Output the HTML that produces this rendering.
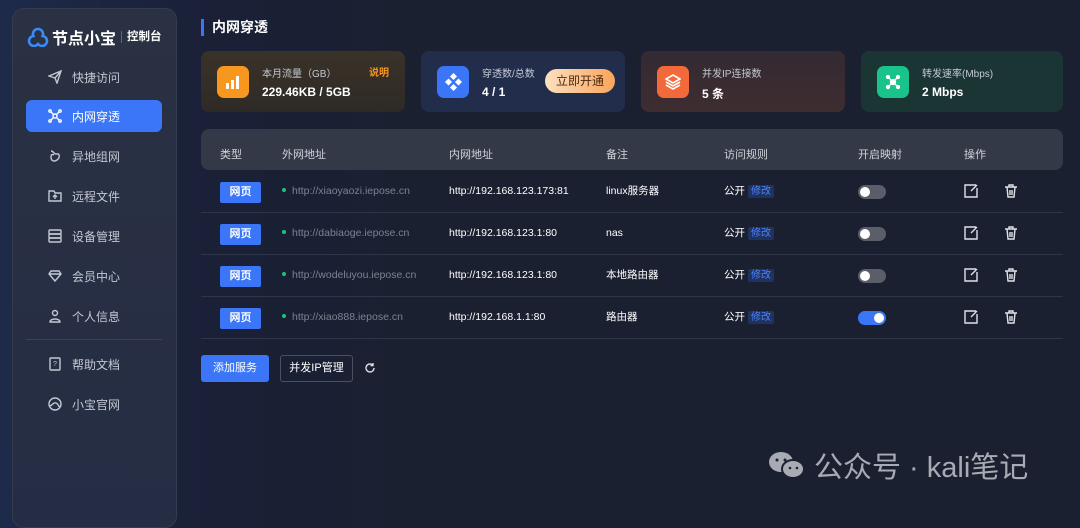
<!DOCTYPE html><html><head><meta charset="utf-8"><style>
*{margin:0;padding:0;box-sizing:border-box}
body{width:1080px;height:509px;overflow:hidden;background:linear-gradient(90deg,#1d2a4a 0,#1a2036 20%,#1b2030 40%,#1b2030 100%);font-family:"Liberation Sans","Noto Sans CJK SC",sans-serif;color:#fff;position:relative}
.side{position:absolute;left:12px;top:8px;width:165px;height:520px;border-radius:12px;background:linear-gradient(180deg,#2a3142,#252d45);border:1px solid #343b4d}
.logo{position:absolute;left:14px;top:16px;display:flex;align-items:center;font-size:16px;font-weight:bold;white-space:nowrap}
.logo small{font-size:11.5px;border-left:1px solid #666;padding-left:5px;margin-left:5px;font-weight:bold;line-height:12px}
.nav{position:absolute;left:13px;width:136px;height:32px;border-radius:6px;display:flex;align-items:center;padding-left:22px;font-size:12px;color:#c4c8d2}
.nav svg{width:14px;height:14px;margin-right:10px;fill:none;stroke:#c4c8d2;stroke-width:1.4}
.nav.act{background:#3a76f7;color:#fff}.nav.act svg{stroke:#fff}
.title{position:absolute;left:201px;top:19px;border-left:3px solid #3a76f7;padding-left:8px;font-size:14px;font-weight:bold;height:17px;line-height:17px}
.card{position:absolute;top:51px;height:61px;border-radius:8px;overflow:hidden}
.ic{position:absolute;left:16px;top:15px;width:32px;height:32px;border-radius:7px;display:flex;align-items:center;justify-content:center}
.cl{position:absolute;left:61px;top:14px;font-size:10px;color:#c4c8d2}
.cv{position:absolute;left:61px;top:34px;font-size:12px;font-weight:bold}
.th{position:absolute;left:201px;top:129px;width:862px;height:41px;background:#343947;border-radius:8px}
.cell{position:absolute;font-size:11px}
.hd{top:146px;color:#d0d3da}
.row{position:absolute;left:201px;width:862px;height:42px;border-bottom:1px solid #30364a}
.tag{position:absolute;left:19px;top:11px;width:41px;height:21px;background:#3a76f7;border-radius:2px;font-size:11px;font-weight:bold;text-align:center;line-height:21px}
.ext{position:absolute;left:81px;top:13px;font-size:10.5px;line-height:14px;color:#7d8290}
.ext:before{content:"";display:inline-block;width:4px;height:4px;border-radius:50%;background:#1fc27c;margin-right:6px;vertical-align:2px}
.r{position:absolute;top:13px;font-size:10.5px;line-height:14px;height:14px;white-space:nowrap}
.mod{background:#1f3260;color:#4b83ff;padding:1px 3px;margin-left:3px;border-radius:2px;font-size:10px}
.tg{position:absolute;left:657px;top:14px;width:28px;height:14px;border-radius:7px;background:#5a5e69}
.tg i{position:absolute;left:2px;top:2px;width:10px;height:10px;border-radius:50%;background:#fff}
.tg.on{background:#3a76f7}.tg.on i{left:16px}
.op{position:absolute;top:12px;width:16px;height:16px;fill:none;stroke:#e0e2e8;stroke-width:1.4}
</style></head><body>
<div class="side">
<div class="logo"><svg width="22" height="20" viewBox="0 0 22 20"><path d="M11 2a5 5 0 0 0-4.6 7A5 5 0 1 0 11 17a5 5 0 1 0 4.6-8A5 5 0 0 0 11 2z" fill="none" stroke="#3a8af7" stroke-width="2.6"/></svg><span style="margin-left:3px">节点小宝</span><small>控制台</small></div>
<div class="nav" style="top:52px"><svg viewBox="0 0 14 14"><path d="M1 6L13 1 9 13 7 8z M7 8l6-7"/></svg>快捷访问</div>
<div class="nav act" style="top:91px"><svg viewBox="0 0 14 14"><circle cx="7" cy="7" r="2"/><circle cx="2" cy="2" r="1.2"/><circle cx="12" cy="2" r="1.2"/><circle cx="2" cy="12" r="1.2"/><circle cx="12" cy="12" r="1.2"/><path d="M3 3l2.5 2.5M11 3L8.5 5.5M3 11l2.5-2.5M11 11L8.5 8.5"/></svg>内网穿透</div>
<div class="nav" style="top:131px"><svg viewBox="0 0 14 14"><path d="M3 2c3 0 3 4 6 3s3 4 0 6-6 1-6-3 3-2 3-2"/></svg>异地组网</div>
<div class="nav" style="top:171px"><svg viewBox="0 0 14 14"><path d="M1 2h5l1 2h6v8H1z M7 10V6M5 8l2-2 2 2"/></svg>远程文件</div>
<div class="nav" style="top:211px"><svg viewBox="0 0 14 14"><rect x="1" y="1" width="12" height="4" rx="1"/><rect x="1" y="5" width="12" height="4" rx="1"/><rect x="1" y="9" width="12" height="4" rx="1"/></svg>设备管理</div>
<div class="nav" style="top:251px"><svg viewBox="0 0 14 14"><path d="M3 2h8l2 3-6 7-6-7z M1 5h12"/></svg>会员中心</div>
<div class="nav" style="top:291px"><svg viewBox="0 0 14 14"><circle cx="7" cy="4" r="2.5"/><path d="M2 13c0-4 10-4 10 0z"/></svg>个人信息</div>
<div style="position:absolute;left:13px;top:330px;width:136px;height:1px;background:#3a4152"></div>
<div class="nav" style="top:339px"><svg viewBox="0 0 14 14"><rect x="2" y="1" width="10" height="12" rx="1"/><text x="5" y="9" font-size="7" fill="#c4c8d2" stroke="none">?</text></svg>帮助文档</div>
<div class="nav" style="top:379px"><svg viewBox="0 0 14 14"><circle cx="7" cy="7" r="6"/><path d="M2 9c3-1 3-4 6-3s2 4 4 4"/></svg>小宝官网</div>
</div>
<div class="title">内网穿透</div>
<div class="card" style="left:201px;width:204px;background:linear-gradient(180deg,#3a3228,#2e2a26)"><div class="ic" style="background:#f7971e"><svg width="16" height="14"><rect x="1" y="8" width="3" height="6" fill="#fff"/><rect x="6" y="5" width="3" height="9" fill="#fff"/><rect x="11" y="1" width="3" height="13" fill="#fff"/></svg></div><div class="cl">本月流量（GB）</div><div class="cv">229.46KB / 5GB</div><div style="position:absolute;right:16px;top:13px;font-size:10px;color:#f7941e;font-weight:bold">说明</div></div>
<div class="card" style="left:421px;width:204px;background:#222d4c"><div class="ic" style="background:#3a76f7"><svg width="18" height="18"><g fill="#fff"><rect x="7" y="1" width="5" height="5" transform="rotate(45 9.5 3.5)"/><rect x="2" y="6.5" width="5" height="5" transform="rotate(45 4.5 9)"/><rect x="12" y="6.5" width="5" height="5" transform="rotate(45 14.5 9)"/><rect x="7" y="12" width="5" height="5" transform="rotate(45 9.5 14.5)"/></g></svg></div><div class="cl">穿透数/总数</div><div class="cv">4 / 1</div><div style="position:absolute;left:124px;top:18px;width:70px;height:24px;border-radius:12px;background:linear-gradient(90deg,#fde0c0,#f9a45a);color:#4a2a10;font-size:12px;text-align:center;line-height:24px">立即开通</div></div>
<div class="card" style="left:641px;width:204px;background:linear-gradient(180deg,#332a33,#3e2d30)"><div class="ic" style="background:#f26a3a"><svg width="16" height="16" fill="none" stroke="#fff" stroke-width="1.6"><path d="M8 1l7 4-7 4-7-4z M1 8l7 4 7-4 M1 11l7 4 7-4"/></svg></div><div class="cl">并发IP连接数</div><div class="cv">5 条</div></div>
<div class="card" style="left:861px;width:202px;background:#1b3535"><div class="ic" style="background:#19c38a"><svg width="16" height="16" fill="#fff" stroke="#fff" stroke-width="1.3"><circle cx="8" cy="8" r="2.5"/><circle cx="3" cy="3" r="1.5"/><circle cx="13" cy="3" r="1.5"/><circle cx="3" cy="13" r="1.5"/><circle cx="13" cy="13" r="1.5"/><path d="M3 3l10 10M13 3L3 13"/></svg></div><div class="cl">转发速率(Mbps)</div><div class="cv">2 Mbps</div></div>
<div class="th"></div>
<div class="cell hd" style="left:220px">类型</div><div class="cell hd" style="left:282px">外网地址</div><div class="cell hd" style="left:449px">内网地址</div><div class="cell hd" style="left:606px">备注</div><div class="cell hd" style="left:724px">访问规则</div><div class="cell hd" style="left:858px">开启映射</div><div class="cell hd" style="left:964px">操作</div>
<div class="row" style="top:171px"><div class="tag">网页</div><div class="ext">http://xiaoyaozi.iepose.cn</div><div class="r" style="left:248px">http://192.168.123.173:81</div><div class="r" style="left:405px">linux服务器</div><div class="r" style="left:523px">公开<span class="mod">修改</span></div><div class="tg"><i></i></div><svg class="op" style="left:762px" viewBox="0 0 16 16"><path d="M13 2H2v12h12V5 M8 8l6-6"/></svg><svg class="op" style="left:802px" viewBox="0 0 16 16"><path d="M2 4h12M6 4V2h4v2M4 4l1 10h6l1-10M7 7v5M9 7v5"/></svg></div>
<div class="row" style="top:213px"><div class="tag">网页</div><div class="ext">http://dabiaoge.iepose.cn</div><div class="r" style="left:248px">http://192.168.123.1:80</div><div class="r" style="left:405px">nas</div><div class="r" style="left:523px">公开<span class="mod">修改</span></div><div class="tg"><i></i></div><svg class="op" style="left:762px" viewBox="0 0 16 16"><path d="M13 2H2v12h12V5 M8 8l6-6"/></svg><svg class="op" style="left:802px" viewBox="0 0 16 16"><path d="M2 4h12M6 4V2h4v2M4 4l1 10h6l1-10M7 7v5M9 7v5"/></svg></div>
<div class="row" style="top:255px"><div class="tag">网页</div><div class="ext">http://wodeluyou.iepose.cn</div><div class="r" style="left:248px">http://192.168.123.1:80</div><div class="r" style="left:405px">本地路由器</div><div class="r" style="left:523px">公开<span class="mod">修改</span></div><div class="tg"><i></i></div><svg class="op" style="left:762px" viewBox="0 0 16 16"><path d="M13 2H2v12h12V5 M8 8l6-6"/></svg><svg class="op" style="left:802px" viewBox="0 0 16 16"><path d="M2 4h12M6 4V2h4v2M4 4l1 10h6l1-10M7 7v5M9 7v5"/></svg></div>
<div class="row" style="top:297px"><div class="tag">网页</div><div class="ext">http://xiao888.iepose.cn</div><div class="r" style="left:248px">http://192.168.1.1:80</div><div class="r" style="left:405px">路由器</div><div class="r" style="left:523px">公开<span class="mod">修改</span></div><div class="tg on"><i></i></div><svg class="op" style="left:762px" viewBox="0 0 16 16"><path d="M13 2H2v12h12V5 M8 8l6-6"/></svg><svg class="op" style="left:802px" viewBox="0 0 16 16"><path d="M2 4h12M6 4V2h4v2M4 4l1 10h6l1-10M7 7v5M9 7v5"/></svg></div>
<div style="position:absolute;left:201px;top:355px;width:68px;height:27px;background:#3a76f7;border-radius:3px;font-size:11px;text-align:center;line-height:27px">添加服务</div>
<div style="position:absolute;left:280px;top:355px;width:73px;height:27px;border:1px solid #4a505e;border-radius:3px;font-size:11px;text-align:center;line-height:25px">并发IP管理</div>
<svg style="position:absolute;left:364px;top:362px" width="12" height="12" fill="none" stroke="#ddd" stroke-width="1.4"><path d="M10 6a4 4 0 1 1-1.2-2.9M9 1v2.5H6.5"/></svg>
<div style="position:absolute;left:766px;top:444px;display:flex;align-items:center;color:#a8abb3;font-size:29px;white-space:nowrap"><svg width="42" height="30" viewBox="0 0 42 30"><ellipse cx="15" cy="12" rx="12" ry="10" fill="#a8abb3"/><ellipse cx="27" cy="19" rx="11" ry="9" fill="#a8abb3" stroke="#1b2030" stroke-width="2"/><circle cx="11" cy="10" r="1.5" fill="#1b2030"/><circle cx="19" cy="10" r="1.5" fill="#1b2030"/><circle cx="24" cy="18" r="1.3" fill="#1b2030"/><circle cx="31" cy="18" r="1.3" fill="#1b2030"/></svg><span style="margin-left:6px">公众号 · kali笔记</span></div>
</body></html>
